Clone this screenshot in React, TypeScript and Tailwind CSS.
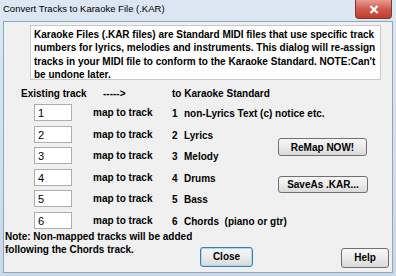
import React from 'react';

const rows = [
  { n: '1', label: 'non-Lyrics Text (c) notice etc.' },
  { n: '2', label: 'Lyrics' },
  { n: '3', label: 'Melody' },
  { n: '4', label: 'Drums' },
  { n: '5', label: 'Bass' },
  { n: '6', label: 'Chords  (piano or gtr)' },
];

const WinButton = ({ label, focused, className }: { label: string; focused?: boolean; className: string }) => (
  <button
    className={`flex items-center justify-center rounded-[3px] border bg-gradient-to-b from-[#f6f6f6] via-[#ebebeb] to-[#d9d9d9] text-[10px] font-bold text-black ${
      focused ? 'border-[#3c7fb1] shadow-[inset_0_0_0_1px_#a6d9f4]' : 'border-[#707070]'
    } ${className}`}
  >
    {label}
  </button>
);

const App = () => {
  return (
    <div
      className="flex h-[276px] w-[396px] flex-col bg-gradient-to-b from-[#dce7f3] to-[#c9d9ea]"
      style={{ fontFamily: '"Liberation Sans", Arial, sans-serif' }}
    >
      <div className="flex h-[21px] shrink-0 items-start justify-between">
        <span className="pl-[3px] pt-[3px] text-[9.5px] leading-[12px] text-black">
          Convert Tracks to Karaoke File (.KAR)
        </span>
        <div className="mr-[4px] flex h-[19px] w-[37px] items-center justify-center rounded-b-[4px] border border-t-0 border-[#7a3a32] bg-gradient-to-b from-[#e69b8f] via-[#cf5b4c] to-[#c23a2a]">
          <svg width="10" height="9" viewBox="0 0 10 9">
            <path d="M1.5 1 L8.5 8 M8.5 1 L1.5 8" stroke="#fff" strokeWidth="2.2" />
          </svg>
        </div>
      </div>

      <div className="mx-[3px] mb-[3px] flex-1 border border-[#8ea5c0] bg-[#f0f0f0] text-[10px] font-bold leading-[13px] text-black">
        <div className="ml-[26px] mt-[3px] h-[55px] w-[351px] whitespace-nowrap border border-[#c8c8c8] bg-white px-[3px] pt-[2px] leading-[13.3px]">
          Karaoke Files (.KAR files) are Standard MIDI files that use specific track
          <br />
          numbers for lyrics, melodies and instruments. This dialog will re-assign
          <br />
          tracks in your MIDI file to conform to the Karaoke Standard. NOTE:Can't
          <br />
          be undone later.
        </div>

        <div className="mt-[7px] flex h-[13px]">
          <span className="ml-[17px] w-[82px]">Existing track</span>
          <span className="w-[69px]">-----&gt;</span>
          <span>to Karaoke Standard</span>
        </div>

        <div className="mt-[4px] flex">
          <div className="flex w-[270px] shrink-0 flex-col whitespace-nowrap">
            {rows.map((r, i) => (
              <div key={r.n} className={`flex items-start ${i === rows.length - 1 ? 'h-[17px]' : 'h-[21.6px]'}`}>
                <div className="ml-[30px] h-[17px] w-[38px] shrink-0 border border-[#abadb3] bg-white pl-[3px] pt-[1px] text-[11px] font-normal leading-[14px]">
                  {r.n}
                </div>
                <span className="ml-[21px] mt-[2px] w-[79px] shrink-0">map to track</span>
                <span className="mt-[3px] w-[12px] shrink-0">{r.n}</span>
                <span className="mt-[3px] shrink-0 whitespace-pre">{r.label}</span>
              </div>
            ))}
          </div>
          <div className="ml-[4px] flex flex-col pt-[34px]">
            <WinButton label="ReMap NOW!" className="h-[18px] w-[89px]" />
            <WinButton label="SaveAs .KAR..." className="mt-[20px] h-[17px] w-[90px]" />
          </div>
        </div>

        <div className="mt-[1px] flex items-start">
          <div className="ml-[1px] w-[195px] leading-[13.5px]">
            Note: Non-mapped tracks will be added
            <br />
            following the Chords track.
          </div>
          <WinButton label="Close" focused className="mt-[17px] h-[20px] w-[53px]" />
          <WinButton label="Help" className="ml-[88px] mt-[18px] h-[20px] w-[48px]" />
        </div>
      </div>
    </div>
  );
};

export default App;
